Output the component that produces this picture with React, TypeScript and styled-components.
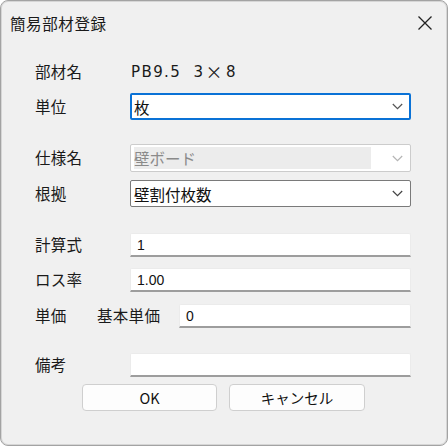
import React from "react";
import styled, { createGlobalStyle } from "styled-components";

const Global = createGlobalStyle`
  html, body { margin: 0; padding: 0; background: #ffffff; }
  body { font-family: "Noto Sans CJK JP", "Noto Sans", sans-serif; }
  * { box-sizing: border-box; }
`;

const Window = styled.div`
  width: 448px;
  height: 446px;
  background: #f0f0f0;
  border: 1px solid #a3a3a3;
  border-radius: 8px;
  box-shadow: inset 0 0 0 1px #d6d6d6;
  overflow: hidden;
  display: flex;
  flex-direction: column;
  color: #1a1a1a;
`;

const TitleBar = styled.div`
  height: 43px;
  display: flex;
  align-items: center;
  justify-content: space-between;
  padding: 0 12px 0 9px;
  font-size: 15.5px;
  letter-spacing: 0.6px;
`;

const CloseBtn = styled.div`
  width: 20px;
  height: 20px;
  display: flex;
  align-items: center;
  justify-content: center;
`;

const Form = styled.div`
  display: flex;
  flex-direction: column;
  padding: 0 36px 0 34px;
`;

const Row = styled.div<{ $mt: number; $h: number }>`
  display: grid;
  grid-template-columns: 95px 1fr;
  align-items: center;
  margin-top: ${(p) => p.$mt}px;
  height: ${(p) => p.$h}px;
`;

const PriceRow = styled(Row)`
  grid-template-columns: 62px 82px 1fr;
`;

const Label = styled.div`
  font-size: 15.5px;
  line-height: 1;
  letter-spacing: 0.3px;
`;

const Value = styled.div`
  font-family: "DejaVu Sans", "Noto Sans CJK JP", sans-serif;
  font-size: 15px;
  letter-spacing: 1.4px;
  padding-left: 1px;
  white-space: pre;
  display: flex;
  align-items: center;
`;

const Times = styled.span`
  font-family: "Noto Sans CJK JP", sans-serif;
  font-size: 17px;
  padding: 0 2px 0 1px;
`;

const Combo = styled.div<{ $state: "focus" | "disabled" | "normal" }>`
  height: 100%;
  display: flex;
  align-items: center;
  justify-content: space-between;
  padding: 0 ${(p) => (p.$state === "focus" ? 6 : 7)}px 0 ${(p) => (p.$state === "focus" ? 2 : 3)}px;
  background: #ffffff;
  border: ${(p) =>
    p.$state === "focus"
      ? "2px solid #0a72d6"
      : p.$state === "disabled"
      ? "1px solid #cccccc"
      : "1px solid #7a7a7a"};
  border-radius: 2px;
  font-size: 15.5px;
  color: ${(p) => (p.$state === "disabled" ? "#8a8a8a" : "#111")};
`;

const ComboText = styled.div<{ $disabled?: boolean }>`
  flex: 1;
  align-self: stretch;
  display: flex;
  align-items: center;
  margin: ${(p) => (p.$disabled ? "2px 21px 2px 0" : "0")};
  background: ${(p) => (p.$disabled ? "#ececec" : "transparent")};
`;

const TextBox = styled.div`
  height: 100%;
  background: #ffffff;
  border: 1px solid #ebebeb;
  border-bottom: 2px solid #9d9d9d;
  border-radius: 2px 2px 0 0;
  display: flex;
  align-items: center;
  padding-left: 6px;
  font-family: "Liberation Sans", sans-serif;
  font-size: 14px;
  color: #111;
`;

const Buttons = styled.div`
  display: flex;
  gap: 12px;
  margin-top: 7px;
  padding-left: 47px;
`;

const Button = styled.div<{ $w: number }>`
  width: ${(p) => p.$w}px;
  height: 27px;
  background: #fdfdfd;
  border: 1px solid #cfcfcf;
  border-radius: 4px;
  display: flex;
  align-items: center;
  justify-content: center;
  font-size: 14.5px;
  color: #111;
`;

const Chevron = ({ color }: { color: string }) => (
  <svg width="11" height="7" viewBox="0 0 11 7">
    <path d="M0.8 1 L5.5 5.7 L10.2 1" fill="none" stroke={color} strokeWidth="1.2" />
  </svg>
);

export default function App() {
  return (
    <>
      <Global />
      <Window>
        <TitleBar>
          <span>簡易部材登録</span>
          <CloseBtn>
            <svg width="16" height="16" viewBox="0 0 16 16">
              <path d="M1.5 1.5 L14.5 14.5 M14.5 1.5 L1.5 14.5" stroke="#222" strokeWidth="1.3" />
            </svg>
          </CloseBtn>
        </TitleBar>
        <Form>
          <Row $mt={15} $h={24}>
            <Label>部材名</Label>
            <Value>
              {"PB9.5  3"}
              <Times>×</Times>
              {"8"}
            </Value>
          </Row>
          <Row $mt={10} $h={27}>
            <Label>単位</Label>
            <Combo $state="focus">
              <ComboText>枚</ComboText>
              <Chevron color="#555" />
            </Combo>
          </Row>
          <Row $mt={24} $h={27}>
            <Label>仕様名</Label>
            <Combo $state="disabled">
              <ComboText $disabled>壁ボード</ComboText>
              <Chevron color="#b5b5b5" />
            </Combo>
          </Row>
          <Row $mt={9} $h={27}>
            <Label>根拠</Label>
            <Combo $state="normal">
              <ComboText>壁割付枚数</ComboText>
              <Chevron color="#444" />
            </Combo>
          </Row>
          <Row $mt={26} $h={24}>
            <Label>計算式</Label>
            <TextBox>1</TextBox>
          </Row>
          <Row $mt={11} $h={24}>
            <Label>ロス率</Label>
            <TextBox>1.00</TextBox>
          </Row>
          <PriceRow $mt={12} $h={24}>
            <Label>単価</Label>
            <Label>基本単価</Label>
            <TextBox>0</TextBox>
          </PriceRow>
          <Row $mt={25} $h={24}>
            <Label>備考</Label>
            <TextBox />
          </Row>
          <Buttons>
            <Button $w={135}>OK</Button>
            <Button $w={136}>キャンセル</Button>
          </Buttons>
        </Form>
      </Window>
    </>
  );
}
